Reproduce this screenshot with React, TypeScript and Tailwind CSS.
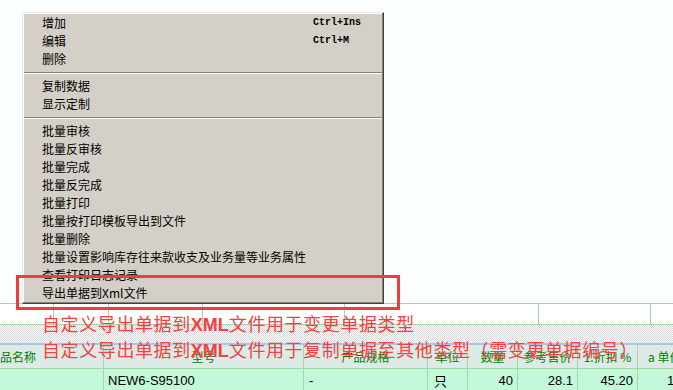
import type { ReactNode } from "react";

type MenuEntry = { label: string; shortcut?: string } | "sep";

const menu: MenuEntry[] = [
  { label: "增加", shortcut: "Ctrl+Ins" },
  { label: "编辑", shortcut: "Ctrl+M" },
  { label: "删除" },
  "sep",
  { label: "复制数据" },
  { label: "显示定制" },
  "sep",
  { label: "批量审核" },
  { label: "批量反审核" },
  { label: "批量完成" },
  { label: "批量反完成" },
  { label: "批量打印" },
  { label: "批量按打印模板导出到文件" },
  { label: "批量删除" },
  { label: "批量设置影响库存往来款收支及业务量等业务属性" },
  { label: "查看打印日志记录" },
  { label: "导出单据到Xml文件" },
];

// column widths of the header / data rows (px)
const cols = [104, 200, 124, 40, 50, 60, 60, 40];
// columns of the half-hidden row above the splitter
const topCols = [54, 55, 94, 142, 194, 112, 30];

function Cell({
  w,
  children,
  className = "",
}: {
  w: number;
  children?: ReactNode;
  className?: string;
}) {
  return (
    <div
      className={`shrink-0 h-full flex items-center border-r border-[#a8d4a8] overflow-hidden whitespace-nowrap ${className}`}
      style={{ width: w }}
    >
      {children}
    </div>
  );
}

export default function App() {
  return (
    <div className="relative w-[673px] h-[390px] overflow-hidden bg-[#fbfefe] font-['Noto_Sans_CJK_SC',sans-serif]">
      <div className="h-[303px]" />

      {/* row partly hidden behind the popup */}
      <div className="flex h-[22px] bg-white border-y border-[#a8d4a8]">
        {topCols.map((w, i) => (
          <Cell key={i} w={w} />
        ))}
      </div>

      {/* splitter */}
      <div className="h-[18px] bg-[image:repeating-conic-gradient(#d6d6d6_0%_25%,#ffffff_0%_50%)] bg-[length:2px_2px]" />
      <div className="h-[2px] bg-[#a6c8e8]" />

      {/* header */}
      <div className="flex h-[24px] bg-[#dcebe6] border-b border-[#a8d4a8] text-[12px] text-[#008000] leading-none">
        <Cell w={cols[0]} className="justify-start">
          品名称
        </Cell>
        <Cell w={cols[1]} className="justify-center">
          型号
        </Cell>
        <Cell w={cols[2]} className="justify-center">
          产品规格
        </Cell>
        <Cell w={cols[3]} className="justify-center">
          单位
        </Cell>
        <Cell w={cols[4]} className="justify-center">
          数量
        </Cell>
        <Cell w={cols[5]} className="justify-center">
          参考售价
        </Cell>
        <Cell w={cols[6]} className="justify-center">
          1.折扣 %
        </Cell>
        <Cell w={cols[7]} className="justify-start pl-[10px]">
          a 单价
        </Cell>
      </div>

      {/* data row */}
      <div className="flex h-[22px] bg-[#c2f7da] text-[13px] text-black font-['Liberation_Sans',sans-serif] leading-none">
        <Cell w={cols[0]} />
        <Cell w={cols[1]} className="pl-[4px]">
          NEW6-S95100
        </Cell>
        <Cell w={cols[2]} className="pl-[5px]">
          -
        </Cell>
        <Cell w={cols[3]} className="pl-[6px] font-['Noto_Sans_CJK_SC',sans-serif]">
          只
        </Cell>
        <Cell w={cols[4]} className="justify-end pr-[4px]">
          40
        </Cell>
        <Cell w={cols[5]} className="justify-end pr-[4px]">
          28.1
        </Cell>
        <Cell w={cols[6]} className="justify-end pr-[4px]">
          45.20
        </Cell>
        <Cell w={cols[7]} className="pl-[29px]">
          12
        </Cell>
      </div>

      {/* context menu */}
      <div className="absolute left-[22px] top-[12px] w-[362px] h-[292px] bg-[#d4d0c8] border border-t-[#ece9e2] border-l-[#ece9e2] border-r-[#404040] border-b-[#404040] shadow-[inset_-1px_-1px_#808080,inset_1px_1px_#ffffff] pt-[1px] text-[12px] text-black">
        {menu.map((m, i) =>
          m === "sep" ? (
            <div key={i} className="h-[9px] flex flex-col justify-center px-[1px]">
              <div className="border-t border-[#808080] border-b border-b-white" />
            </div>
          ) : (
            <div key={i} className="h-[18px] flex items-center pl-[19px] leading-none">
              <span className="w-[271px] shrink-0 whitespace-nowrap">{m.label}</span>
              {m.shortcut && (
                <span className="font-['Liberation_Mono',monospace] text-[10px] font-bold">{m.shortcut}</span>
              )}
            </div>
          )
        )}
      </div>

      {/* annotation */}
      <div className="absolute left-[16px] top-[275px] w-[384px] h-[35px] border-[3px] border-[#f23b3b]" />
      <div className="absolute left-[42px] top-[311px] text-[18px] leading-[24px] tracking-[0.6px] text-[#f53f42] whitespace-nowrap">
        <div>
          自定义导出单据到<span className="font-['Liberation_Sans',sans-serif] font-bold tracking-normal">XML</span>
          文件用于变更单据类型
        </div>
        <div>
          自定义导出单据到<span className="font-['Liberation_Sans',sans-serif] font-bold tracking-normal">XML</span>
          文件用于复制单据至其他类型（需变更单据编号）
        </div>
      </div>
    </div>
  );
}
